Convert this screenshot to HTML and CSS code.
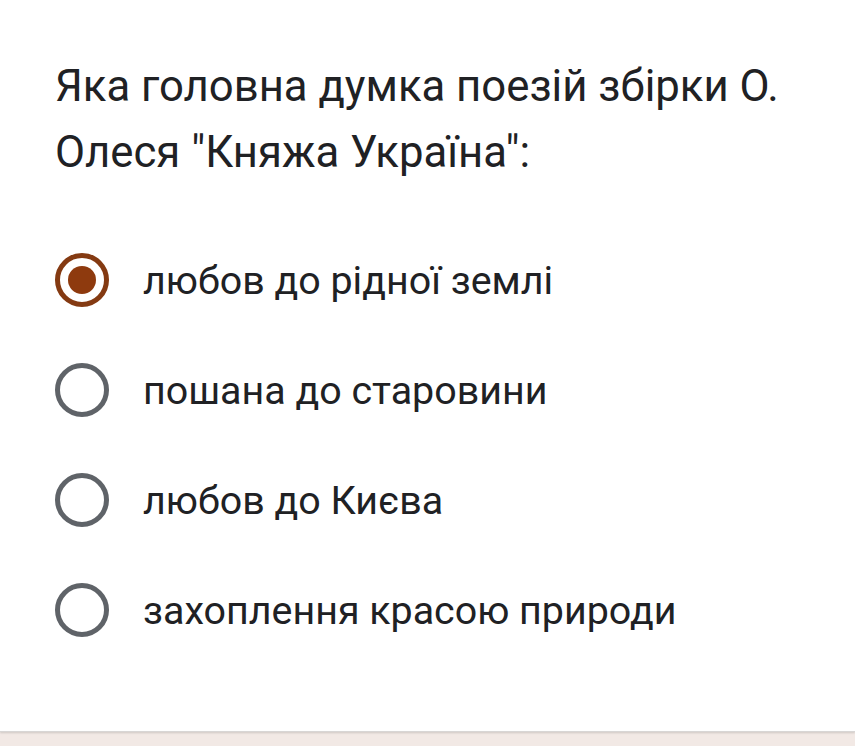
FILE: index.html
```html
<!DOCTYPE html>
<html lang="uk">
<head>
<meta charset="utf-8">
<link rel="stylesheet" href="styles.css">
</head>
<body>
<div class="card">
  <div class="title">Яка головна думка поезій збірки О. Олеся "Княжа Україна":</div>
  <div class="options">
    <div class="option"><span class="radio checked"><span class="dot"></span></span><span class="label">любов до рідної землі</span></div>
    <div class="option"><span class="radio"></span><span class="label">пошана до старовини</span></div>
    <div class="option"><span class="radio"></span><span class="label">любов до Києва</span></div>
    <div class="option"><span class="radio"></span><span class="label">захоплення красою природи</span></div>
  </div>
</div>
</body>
</html>
```
FILE: styles.css
```css
html, body { margin: 0; padding: 0; }
body {
  background: #f2e9e5;
  width: 855px;
  height: 746px;
  overflow: hidden;
}
.card {
  background: #fff;
  height: 732px;
  border-bottom: 1px solid #d8d6d5;
  box-shadow: 0 1px 2px rgba(0,0,0,0.15);
  padding: 0 40px 0 55px;
  box-sizing: border-box;
}
.title {
  font-family: Roboto, "Noto Sans", sans-serif;
  color: #202124;
  font-size: 43.7px;
  line-height: 66px;
  padding-top: 53px;
  width: 760px;
}
.options {
  margin-top: 40px;
  display: flex;
  flex-direction: column;
}
.option {
  display: flex;
  align-items: center;
  height: 110px;
}
.radio {
  width: 54px;
  height: 54px;
  box-sizing: border-box;
  border: 5px solid #5f6368;
  border-radius: 50%;
  display: flex;
  align-items: center;
  justify-content: center;
  flex: none;
}
.radio.checked { border-color: #843a12; }
.dot {
  width: 28px;
  height: 28px;
  border-radius: 50%;
  background: #8e3a0e;
}
.label {
  margin-left: 34px;
  font-family: Roboto, sans-serif;
  font-size: 39.4px;
  color: #202124;
}
```
